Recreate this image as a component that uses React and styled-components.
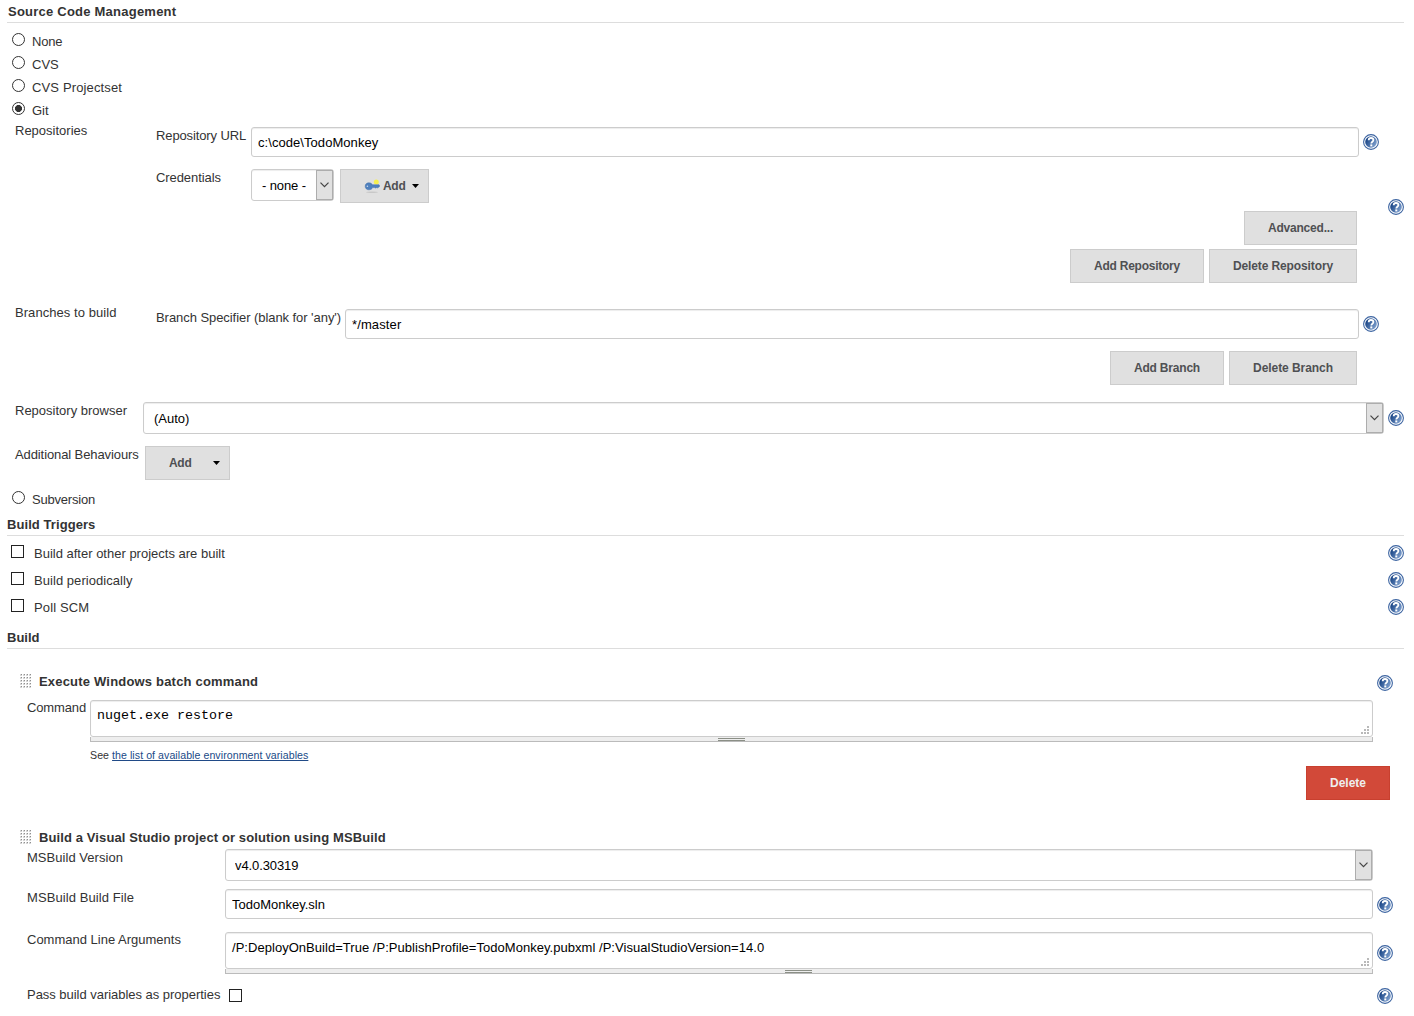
import React from "react";
import styled, { createGlobalStyle } from "styled-components";

const GlobalStyle = createGlobalStyle`
  * {
    box-sizing: border-box;
  }
  body {
    margin: 0;
    background: #fff;
    color: #333;
    font: 13px/15px "Liberation Sans", Arial, sans-serif;
  }
`;

function HelpIcon({ top = 0 }) {
  return (
    <Help $top={top} viewBox="0 0 16 16" aria-label="Help">
      <defs>
        <linearGradient id="helpFill" x1="0" y1="0.2" x2="1" y2="0.8">
          <stop offset="0.15" stopColor="#1f4a8a" />
          <stop offset="1" stopColor="#85a6d3" />
        </linearGradient>
      </defs>
      <circle cx="8" cy="8" r="7.4" fill="#fff" stroke="#3c64a1" strokeWidth="1.1" />
      <circle cx="8" cy="8" r="5.8" fill="url(#helpFill)" />
      <path
        d="M5.700 6.300C5.700 4.700 6.700 4 8 4s2.400.800 2.400 2.100c0 1.600-2.100 1.700-2.100 3.400"
        fill="none"
        stroke="#fff"
        strokeWidth="1.800"
      />
      <rect x="7.300" y="10.400" width="2" height="2" fill="#fff" />
    </Help>
  );
}

function KeyIcon() {
  return (
    <Key viewBox="0 0 16 16">
      <ellipse cx="8" cy="14.300" rx="6" ry="0.700" fill="#c8c8c8" />
      <circle cx="12.300" cy="4" r="2.500" fill="#f6f04e" />
      <path
        d="M4.800 4.800c1.900 0 3 .8 3.600 2H15l.7 1.200-.8 1.200h-1l-.7 1-.9-1-.8 1-.8-.6H8.600c-.6 1.400-1.800 2.200-3.800 2.200C2.600 11.800 1.200 10.300 1.200 8.300s1.400-3.500 3.600-3.500z"
        fill="#4f80bd"
        stroke="#3f6ca8"
        strokeWidth="0.500"
      />
      <circle cx="3.400" cy="8.300" r="0.800" fill="#cfdcec" />
    </Key>
  );
}

function Caret() {
  return (
    <CaretSvg viewBox="0 0 7 4">
      <path d="M0 0h7L3.500 4z" fill="#000" />
    </CaretSvg>
  );
}

function Dropdown({ value, width, spacing, indent = 10 }) {
  return (
    <SelectWrap $width={width}>
      <Select $spacing={spacing} $indent={indent}>
        <option>{value}</option>
      </Select>
      <Arrow>
        <svg width="9" height="6" viewBox="0 0 9 6">
          <path d="M0.500 0.700L4.500 4.700L8.500 0.700" fill="none" stroke="#444" strokeWidth="1.200" />
        </svg>
      </Arrow>
    </SelectWrap>
  );
}

function ResizableArea({ value, mono, grip, spacing }) {
  return (
    <AreaWrap>
      <TextArea defaultValue={value} $mono={mono} $spacing={spacing} spellCheck={false} />
      <Resizer viewBox="0 0 8 8">
        <path d="M6 0h2v2h-2zM3 3h2v2h-2zM6 3h2v2h-2zM0 6h2v2h-2zM3 6h2v2h-2zM6 6h2v2h-2z" fill="#b9b9b9" />
      </Resizer>
      <GripBar>
        <Grip $left={grip} />
      </GripBar>
    </AreaWrap>
  );
}

function DragHandle() {
  return (
    <Handle viewBox="0 0 11 14">
      <defs>
        <pattern id="dots" width="3" height="3" patternUnits="userSpaceOnUse">
          <rect width="2" height="2" fill="#d6d6d6" />
          <rect x="1" width="1" height="1" fill="#8f8f8f" />
        </pattern>
      </defs>
      <rect width="11" height="14" fill="url(#dots)" />
    </Handle>
  );
}

const SOURCES = [
  { name: "None", spacing: -0.2 },
  { name: "CVS", spacing: 0 },
  { name: "CVS Projectset", spacing: 0.14 },
  { name: "Git", spacing: 0, checked: true },
];

const TRIGGERS = [
  { name: "Build after other projects are built", spacing: 0 },
  { name: "Build periodically", spacing: 0.05 },
  { name: "Poll SCM", spacing: 0.12 },
];

export default function App() {
  return (
    <Page>
      <GlobalStyle />
      <SectionTitle $indent={1} $spacing={0.23}>Source Code Management</SectionTitle>
      <RadioList>
        {SOURCES.map((source) => (
          <RadioRow key={source.name} $spacing={source.spacing}>
            <Radio name="scm" defaultChecked={source.checked} />
            {source.name}
          </RadioRow>
        ))}
      </RadioList>

      <GitSettings>
        <SettingRow>
          <Label $width={128}>Repositories</Label>
          <Nested>
            <Field $height={42}>
              <Label $width={95} $top={1} $spacing={-0.12}>Repository URL</Label>
              <Input defaultValue="c:\code\TodoMonkey" $spacing={0.06} />
              <HelpIcon top={7} />
            </Field>
            <Field $height={42}>
              <Label $width={95} $top={1} $spacing={-0.08}>Credentials</Label>
              <Dropdown value="- none -" width={83} spacing={-0.12} />
              <AddKeyButton $spacing={-0.3}>
                <KeyIcon />
                Add
                <Caret />
              </AddKeyButton>
            </Field>
            <ButtonRow>
              <Button $width={113} $spacing={-0.2}>Advanced...</Button>
            </ButtonRow>
            <ButtonRow $top={4}>
              <Button $width={134} $spacing={-0.24}>Add Repository</Button>
              <Button $width={148} $spacing={-0.12}>Delete Repository</Button>
            </ButtonRow>
          </Nested>
          <HelpIcon top={76} />
        </SettingRow>

        <SettingRow $top={22}>
          <Label $width={128} $spacing={0.06}>Branches to build</Label>
          <Nested>
            <Field $height={42}>
              <Label $width={189} $top={1} $spacing={-0.06}>Branch Specifier (blank for 'any')</Label>
              <Input defaultValue="*/master" $spacing={0.12} />
              <HelpIcon top={7} />
            </Field>
            <ButtonRow>
              <Button $width={114} $spacing={-0.2}>Add Branch</Button>
              <Button $width={128} $spacing={-0.06}>Delete Branch</Button>
            </ButtonRow>
          </Nested>
          <HelpSpace />
        </SettingRow>

        <SettingRow $top={17}>
          <Label $width={128} $top={1}>Repository browser</Label>
          <Dropdown value="(Auto)" />
          <HelpIcon top={8} />
        </SettingRow>

        <SettingRow $top={12}>
          <Label $width={130} $top={1} $spacing={-0.1}>Additional Behaviours</Label>
          <AddMenuButton $spacing={-0.3}>
            Add
            <Caret />
          </AddMenuButton>
        </SettingRow>
      </GitSettings>

      <RadioList>
        <RadioRow $spacing={-0.2}>
          <Radio name="scm" />
          Subversion
        </RadioRow>
      </RadioList>

      <SectionTitle $top={10} $spacing={0.07}>Build Triggers</SectionTitle>
      <TriggerList>
        {TRIGGERS.map((trigger) => (
          <TriggerRow key={trigger.name}>
            <Checkbox />
            <TriggerName $spacing={trigger.spacing}>{trigger.name}</TriggerName>
            <HelpIcon />
          </TriggerRow>
        ))}
      </TriggerList>

      <SectionTitle $top={15}>Build</SectionTitle>
      <Step $top={25}>
        <StepHeader>
          <DragHandle />
          <StepName $spacing={0.19}>Execute Windows batch command</StepName>
          <HelpIcon top={1} />
        </StepHeader>
        <StepField $top={9}>
          <Label $width={63} $spacing={-0.14}>Command</Label>
          <ResizableArea value="nuget.exe restore" mono grip={627} />
          <HelpSpace />
        </StepField>
        <Hint>
          See <a href="#env">the list of available environment variables</a>
        </Hint>
        <DeleteRow>
          <Button $width={84} $danger>Delete</Button>
        </DeleteRow>
      </Step>

      <Step $top={30}>
        <StepHeader>
          <DragHandle />
          <StepName $spacing={0.11}>Build a Visual Studio project or solution using MSBuild</StepName>
        </StepHeader>
        <StepField $top={2}>
          <Label $width={198} $top={1} $spacing={0.04}>MSBuild Version</Label>
          <Dropdown value="v4.0.30319" spacing={-0.1} indent={9} />
          <HelpSpace />
        </StepField>
        <StepField $top={8}>
          <Label $width={198} $top={1} $spacing={0.09}>MSBuild Build File</Label>
          <Input defaultValue="TodoMonkey.sln" />
          <HelpIcon top={8} />
        </StepField>
        <StepField $top={13}>
          <Label $width={198}>Command Line Arguments</Label>
          <ResizableArea
            value="/P:DeployOnBuild=True /P:PublishProfile=TodoMonkey.pubxml /P:VisualStudioVersion=14.0"
            spacing={0.036}
            grip={559}
          />
          <HelpIcon top={13} />
        </StepField>
        <StepField $top={13}>
          <Label $width={202} $spacing={-0.03}>Pass build variables as properties</Label>
          <Checkbox $top={2} />
          <Spacer />
          <HelpIcon top={1} />
        </StepField>
      </Step>
    </Page>
  );
}

const Page = styled.div`
  width: 1414px;
  height: 1016px;
  padding: 4px 10px 0 7px;
  overflow: hidden;
`;

const SectionTitle = styled.div`
  height: 19px;
  margin-top: ${(p) => p.$top || 0}px;
  padding-left: ${(p) => p.$indent || 0}px;
  border-bottom: 1px solid #ddd;
  font-weight: bold;
  letter-spacing: ${(p) => p.$spacing || 0}px;
`;

const RadioList = styled.div`
  display: flex;
  flex-direction: column;
  gap: 7px;
  padding: 10px 0 0 5px;
`;

const RadioRow = styled.label`
  display: flex;
  height: 16px;
  padding-top: 1px;
  letter-spacing: ${(p) => p.$spacing}px;
`;

const Radio = styled.input.attrs({ type: "radio" })`
  appearance: none;
  width: 13px;
  height: 13px;
  margin: -1px 7px 0 0;
  border: 1px solid #333;
  border-radius: 50%;
  background: #fff;
  &:checked {
    background: radial-gradient(circle, #333 3.2px, #fff 3.8px);
  }
`;

const Checkbox = styled.input.attrs({ type: "checkbox" })`
  appearance: none;
  flex: none;
  width: 13px;
  height: 13px;
  margin: ${(p) => p.$top || 0}px 0 0;
  border: 1px solid #222;
  background: #fff;
`;

const GitSettings = styled.div`
  padding: 5px 0 1px 8px;
`;

const SettingRow = styled.div`
  display: flex;
  align-items: flex-start;
  margin-top: ${(p) => p.$top || 0}px;
`;

const Label = styled.div`
  flex: none;
  width: ${(p) => p.$width}px;
  padding-top: ${(p) => p.$top || 0}px;
  letter-spacing: ${(p) => p.$spacing || 0}px;
  white-space: nowrap;
`;

const Nested = styled.div`
  flex: 1;
  padding: 4px 5px 0 13px;
`;

const Field = styled.div`
  display: flex;
  align-items: flex-start;
  height: ${(p) => p.$height}px;
`;

const Input = styled.input`
  flex: 1;
  min-width: 0;
  height: 30px;
  padding: 0 6px;
  border: 1px solid #ccc;
  border-radius: 3px;
  box-shadow: inset 0 1px 1px rgba(0, 0, 0, 0.075);
  color: #000;
  font: inherit;
  letter-spacing: ${(p) => p.$spacing || 0}px;
`;

const SelectWrap = styled.div`
  position: relative;
  height: 32px;
  ${(p) => (p.$width ? `width: ${p.$width}px;` : "flex: 1;")}
`;

const Select = styled.select`
  appearance: none;
  display: block;
  width: 100%;
  height: 32px;
  padding: 0 18px 0 ${(p) => p.$indent}px;
  border: 1px solid #ccc;
  border-radius: 3px;
  box-shadow: inset 0 1px 1px rgba(0, 0, 0, 0.075);
  background: #fff;
  color: #000;
  font: inherit;
  letter-spacing: ${(p) => p.$spacing || 0}px;
`;

/* lies over the right end of the select */
const Arrow = styled.span`
  position: absolute;
  top: 1px;
  right: 1px;
  display: flex;
  align-items: center;
  justify-content: center;
  width: 17px;
  height: 30px;
  border: 1px solid #adadad;
  background: #e1e1e1;
  pointer-events: none;
`;

const Button = styled.button`
  width: ${(p) => p.$width}px;
  height: 34px;
  padding: 0;
  border: 1px solid ${(p) => (p.$danger ? "#c8402f" : "#ccc")};
  background: ${(p) => (p.$danger ? "#d24939" : "#e0e0e0")};
  color: ${(p) => (p.$danger ? "#eee" : "#4f5053")};
  font: bold 12px/14px "Liberation Sans", Arial, sans-serif;
  letter-spacing: ${(p) => p.$spacing || 0}px;
  white-space: nowrap;
`;

const AddKeyButton = styled(Button)`
  display: flex;
  align-items: center;
  width: 89px;
  margin-left: 6px;
  padding-left: 23px;
`;

const AddMenuButton = styled(Button)`
  display: flex;
  align-items: center;
  justify-content: space-between;
  width: 85px;
  padding: 0 9px 0 23px;
`;

const CaretSvg = styled.svg`
  width: 7px;
  height: 4px;
  margin-left: 7px;
`;

const Key = styled.svg`
  width: 16px;
  height: 16px;
  margin-right: 3px;
`;

const ButtonRow = styled.div`
  display: flex;
  justify-content: flex-end;
  gap: 5px;
  margin-top: ${(p) => p.$top || 0}px;
  padding-right: 22px;
`;

const Help = styled.svg`
  flex: none;
  width: 16px;
  height: 16px;
  margin: ${(p) => p.$top}px 0 0 4px;
`;

const HelpSpace = styled.div`
  flex: none;
  width: 20px;
`;

const Spacer = styled.div`
  flex: 1;
`;

const TriggerList = styled.div`
  display: flex;
  flex-direction: column;
  gap: 11px;
  padding: 9px 0 0 4px;
`;

const TriggerRow = styled.div`
  display: flex;
  height: 16px;
`;

const TriggerName = styled.label`
  flex: 1;
  padding: 1px 0 0 10px;
  letter-spacing: ${(p) => p.$spacing}px;
`;

const Step = styled.div`
  margin-top: ${(p) => p.$top}px;
  padding: 0 11px 0 13px;
`;

const StepHeader = styled.div`
  display: flex;
  height: 17px;
`;

const StepName = styled.div`
  flex: 1;
  padding-left: 8px;
  font-weight: bold;
  letter-spacing: ${(p) => p.$spacing}px;
`;

const Handle = styled.svg`
  width: 11px;
  height: 14px;
`;

const StepField = styled.div`
  display: flex;
  align-items: flex-start;
  margin-top: ${(p) => p.$top}px;
  padding-left: 7px;
`;

const AreaWrap = styled.div`
  position: relative;
  flex: 1;
`;

const TextArea = styled.textarea`
  display: block;
  width: 100%;
  height: 37px;
  padding: 7px 6px 0;
  border: 1px solid #ccc;
  border-radius: 3px;
  box-shadow: inset 0 1px 1px rgba(0, 0, 0, 0.075);
  color: #000;
  font: ${(p) =>
    p.$mono
      ? '13.333px/15px "Liberation Mono", "Courier New", monospace'
      : '13px/15px "Liberation Sans", Arial, sans-serif'};
  letter-spacing: ${(p) => p.$spacing || 0}px;
  overflow: hidden;
  resize: none;
`;

/* corner dots over the text area */
const Resizer = styled.svg`
  position: absolute;
  right: 4px;
  top: 26px;
  width: 8px;
  height: 8px;
`;

const GripBar = styled.div`
  height: 5px;
  padding-top: 1px;
  border: solid #bbb;
  border-width: 0 1px 1px;
  background: #eee;
`;

const Grip = styled.div`
  width: 27px;
  height: 3px;
  margin-left: ${(p) => p.$left}px;
  border: solid #8b8f86;
  border-width: 1px 0;
`;

const Hint = styled.div`
  margin: 8px 0 0 70px;
  font-size: 10.6px;
  line-height: 11px;
  letter-spacing: 0.06px;
  a {
    color: #204a87;
  }
`;

const DeleteRow = styled.div`
  display: flex;
  justify-content: flex-end;
  margin-top: 5px;
  padding-right: 3px;
`;
